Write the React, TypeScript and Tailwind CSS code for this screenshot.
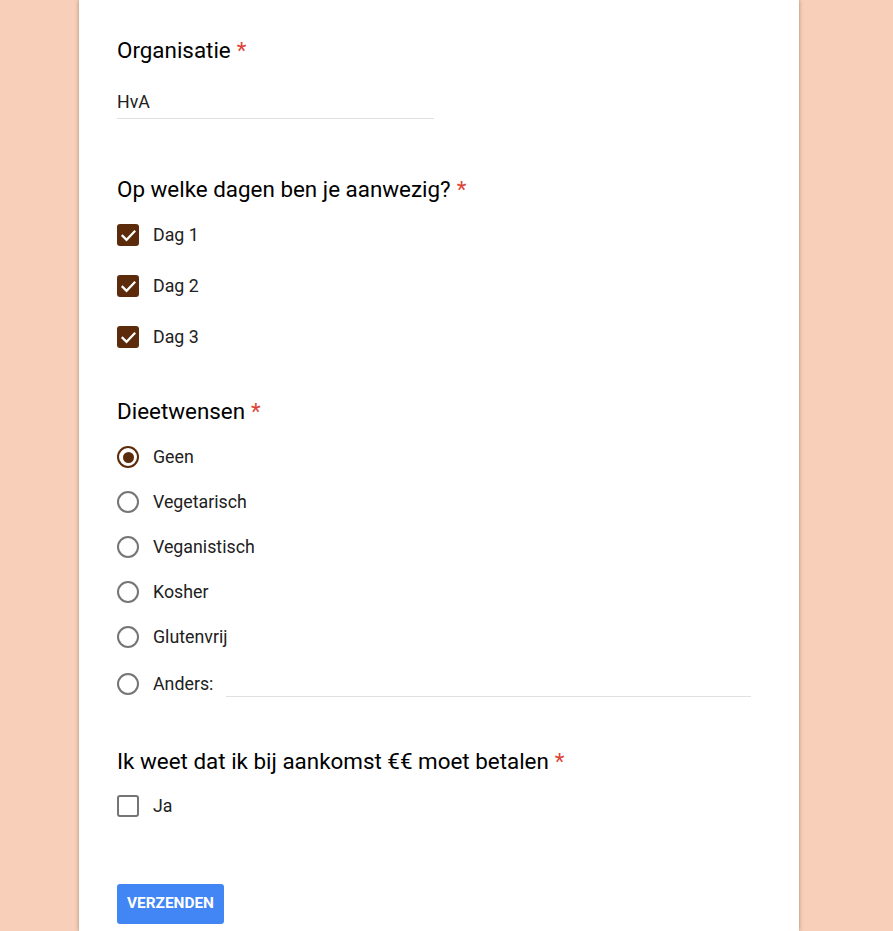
import { useState } from 'react';

const brown = 'bg-[#5c2b0b]';

const Required = () => <span className="text-[#db4437] ml-[6px]">*</span>;

const Check = ({ checked, label }: { checked: boolean; label: string }) => (
  <label className="flex items-center h-6 cursor-pointer">
    {checked ? (
      <span className={`w-[22px] h-[22px] rounded-[3px] ${brown} flex items-center justify-center`}>
        <svg viewBox="0 0 24 24" className="w-[19px] h-[19px]" fill="none" stroke="white" strokeWidth="2.8" strokeLinecap="square">
          <path d="M4.5 12.5l5 5L19.5 7" />
        </svg>
      </span>
    ) : (
      <span className="w-[22px] h-[22px] rounded-[3px] border-2 border-[#757575] box-border" />
    )}
    <span className="ml-[14px] text-[17.8px] text-[#212121]">{label}</span>
  </label>
);

const Radio = ({ checked, label }: { checked: boolean; label: string }) => (
  <div className="flex items-center h-6">
    {checked ? (
      <span className="w-[22px] h-[22px] rounded-full border-2 border-[#5c2b0b] flex items-center justify-center box-border">
        <span className={`w-[11px] h-[11px] rounded-full ${brown}`} />
      </span>
    ) : (
      <span className="w-[22px] h-[22px] rounded-full border-2 border-[#757575] box-border" />
    )}
    <span className="ml-[14px] text-[17.8px] text-[#212121]">{label}</span>
  </div>
);

export default function App() {
  const [org] = useState('HvA');
  const diets = ['Geen', 'Vegetarisch', 'Veganistisch', 'Kosher', 'Glutenvrij'];

  return (
    <div className="h-[931px] overflow-hidden bg-[#f8d0b9]" style={{ fontFamily: 'Roboto, "Liberation Sans", sans-serif' }}>
      <div className="w-[878px]">
        <div className="mx-auto w-[720px] h-[931px] bg-white shadow-[0_0_4px_rgba(0,0,0,0.35)] pl-[38px] pr-[48px] pt-[37px]">
          <h2 className="text-[22.4px] leading-[26px] text-black">
            Organisatie<Required />
          </h2>
          <div className="mt-[27px] w-[317px] border-b border-[#e0e0e0] pb-1 text-[17.8px] leading-6 text-[#212121]">
            {org}
          </div>

          <h2 className="mt-[57px] text-[22.4px] leading-[26px] text-black">
            Op welke dagen ben je aanwezig?<Required />
          </h2>
          <div className="mt-[21px] flex flex-col gap-[27px]">
            <Check checked label="Dag 1" />
            <Check checked label="Dag 2" />
            <Check checked label="Dag 3" />
          </div>

          <h2 className="mt-[49px] text-[22.4px] leading-[26px] text-black">
            Dieetwensen<Required />
          </h2>
          <div className="mt-[21px] flex flex-col gap-[21px]">
            {diets.map((d, i) => (
              <Radio key={d} checked={i === 0} label={d} />
            ))}
          </div>
          <div className="mt-[23px] flex items-center h-6">
            <span className="w-[22px] h-[22px] rounded-full border-2 border-[#757575] box-border" />
            <span className="ml-[14px] text-[17.8px] text-[#212121]">Anders:</span>
            <span className="ml-[13px] flex-1 self-end translate-y-[1px] border-b border-[#e0e0e0]" />
          </div>

          <h2 className="mt-[52px] text-[22.4px] leading-[26px] text-black">
            Ik weet dat ik bij aankomst €€ moet betalen<Required />
          </h2>
          <div className="mt-[20px]">
            <Check checked={false} label="Ja" />
          </div>

          <button className="mt-[66px] h-[40px] w-[107px] rounded-[3px] bg-[#4285f4] text-white text-[15.4px] font-bold">
            VERZENDEN
          </button>
        </div>
      </div>
    </div>
  );
}
